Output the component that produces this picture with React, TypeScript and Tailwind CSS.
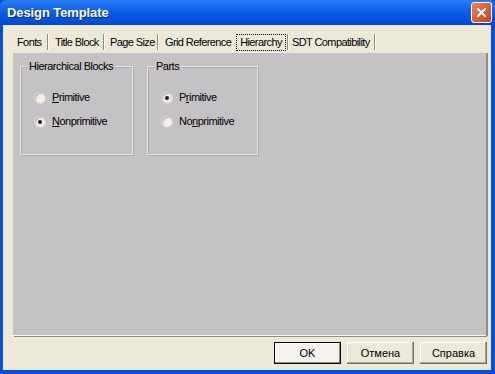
import { X } from "lucide-react";

const font = "font-['Liberation_Sans',Arial,sans-serif]";

function Radio({ checked, label, u }: { checked?: boolean; label: string; u: number }) {
  return (
    <div className="flex items-center h-[13px]">
      <span className="w-[12px] h-[12px] rounded-full border border-[#d2d0cb] bg-[#f1efe6] flex items-center justify-center shadow-[inset_1px_1px_1px_#b8b5ad]">
        {checked && <span className="w-[4px] h-[4px] rounded-full bg-[#1c1c1c]" />}
      </span>
      <span className="ml-[6px] text-[11px] tracking-[-0.5px] text-black leading-none whitespace-nowrap">
        {label.slice(0, u)}
        <span className="underline underline-offset-[1px]">{label[u]}</span>
        {label.slice(u + 1)}
      </span>
    </div>
  );
}

function Group({ title, w, items }: { title: string; w: string; items: { label: string; u: number; checked?: boolean }[] }) {
  return (
    <div className={`relative ${w} h-[89px] border border-[#e4e2e4] shadow-[inset_1px_1px_0_#aeacae,1px_1px_0_#aeacae]`}>
      <span className="absolute -top-[8px] left-[6px] bg-[#c4c2c5] px-[2px] text-[11px] tracking-[-0.5px] leading-[14px] text-black whitespace-nowrap">
        {title}
      </span>
      <div className="flex flex-col gap-[11px] pt-[24px] pl-[13px]">
        {items.map((it) => (
          <Radio key={it.label} {...it} />
        ))}
      </div>
    </div>
  );
}

function Bar() {
  return <span className="w-[2px] h-[16px] border-l border-[#8f8c80] border-r border-r-[#fdfdf9]" />;
}

export default function App() {
  const tabs = [
    { t: "Fonts", w: "w-[37px]", pl: "pl-[4px]" },
    { t: "Title Block", w: "w-[56px]", pl: "pl-[5px]" },
    { t: "Page Size", w: "w-[54px]", pl: "pl-[4px]" },
    { t: "Grid Reference", w: "w-[73px]", pl: "pl-[5px]", nobar: true },
  ];
  return (
    <div className={`w-[495px] h-[374px] bg-[#0a4fd8] flex flex-col ${font}`}>
      <div className="h-[25px] flex items-center justify-between pl-[7px] pr-[3px] bg-gradient-to-b from-[#2a7cf6] via-[#0a5de6] to-[#0349d3] rounded-t-[6px]">
        <span className="text-white font-bold text-[13px] tracking-[-0.1px] [text-shadow:1px_1px_0_#0a2a8a]">Design Template</span>
        <span className="w-[21px] h-[21px] rounded-[3px] border border-white bg-gradient-to-br from-[#e9805f] to-[#c8401c] flex items-center justify-center">
          <X size={15} strokeWidth={3} className="text-white" />
        </span>
      </div>
      <div className="flex-1 ml-[3px] mr-[4px] mb-[4px] bg-[#ece9d8] flex flex-col pt-[8px]">
        <div className="flex items-center h-[18px] pl-[10px]">
          {tabs.map((tb) => (
            <div key={tb.t} className={`${tb.w} shrink-0 flex items-center justify-between`}>
              <span className={`${tb.pl} text-[11px] tracking-[-0.6px] text-black whitespace-nowrap`}>{tb.t}</span>
              {!tb.nobar && <span className="mr-[1px] flex"><Bar /></span>}
            </div>
          ))}
          <div className="flex items-center shrink-0">
            <span className="ml-[3px] h-[17px] w-[50px] border border-dotted border-black flex items-center justify-center text-[11px] tracking-[-0.6px] text-black whitespace-nowrap">
              Hierarchy
            </span>
            <span className="ml-[1px] flex"><Bar /></span>
          </div>
          <div className="flex items-center shrink-0">
            <span className="ml-[3px] text-[11px] tracking-[-0.6px] text-black whitespace-nowrap">SDT Compatibility</span>
            <span className="ml-[4px] flex"><Bar /></span>
          </div>
        </div>
        <div className="flex items-start">
          <div className="ml-[10px] mt-[2px] w-[473px] h-[283px] bg-[#c4c2c5] border-b border-[#f7f6f1] shadow-[1px_1px_0_#8f8c80,2px_0_0_#8f8c80] flex gap-[14px] pl-[7px] pt-[13px]">
            <Group
              title="Hierarchical Blocks"
              w="w-[113px]"
              items={[
                { label: "Primitive", u: 0 },
                { label: "Nonprimitive", u: 0, checked: true },
              ]}
            />
            <Group
              title="Parts"
              w="w-[111px]"
              items={[
                { label: "Primitive", u: 1, checked: true },
                { label: "Nonprimitive", u: 2 },
              ]}
            />
          </div>
        </div>
        <div className="flex justify-end gap-[6px] mt-[6px] pr-[4px]">
          <button className="w-[67px] h-[22px] border border-black bg-[#f4f3ee] shadow-[inset_-1px_-1px_0_#8f8c80,inset_1px_1px_0_#fff] text-[11px] text-black">
            OK
          </button>
          <button className="w-[67px] h-[22px] bg-[#ece9d8] shadow-[inset_-1px_-1px_0_#716f64,inset_-2px_-2px_0_#aca899,inset_1px_1px_0_#fff] text-[11px] text-black">
            Отмена
          </button>
          <button className="w-[67px] h-[22px] bg-[#ece9d8] shadow-[inset_-1px_-1px_0_#716f64,inset_-2px_-2px_0_#aca899,inset_1px_1px_0_#fff] text-[11px] text-black">
            Справка
          </button>
        </div>
      </div>
    </div>
  );
}
